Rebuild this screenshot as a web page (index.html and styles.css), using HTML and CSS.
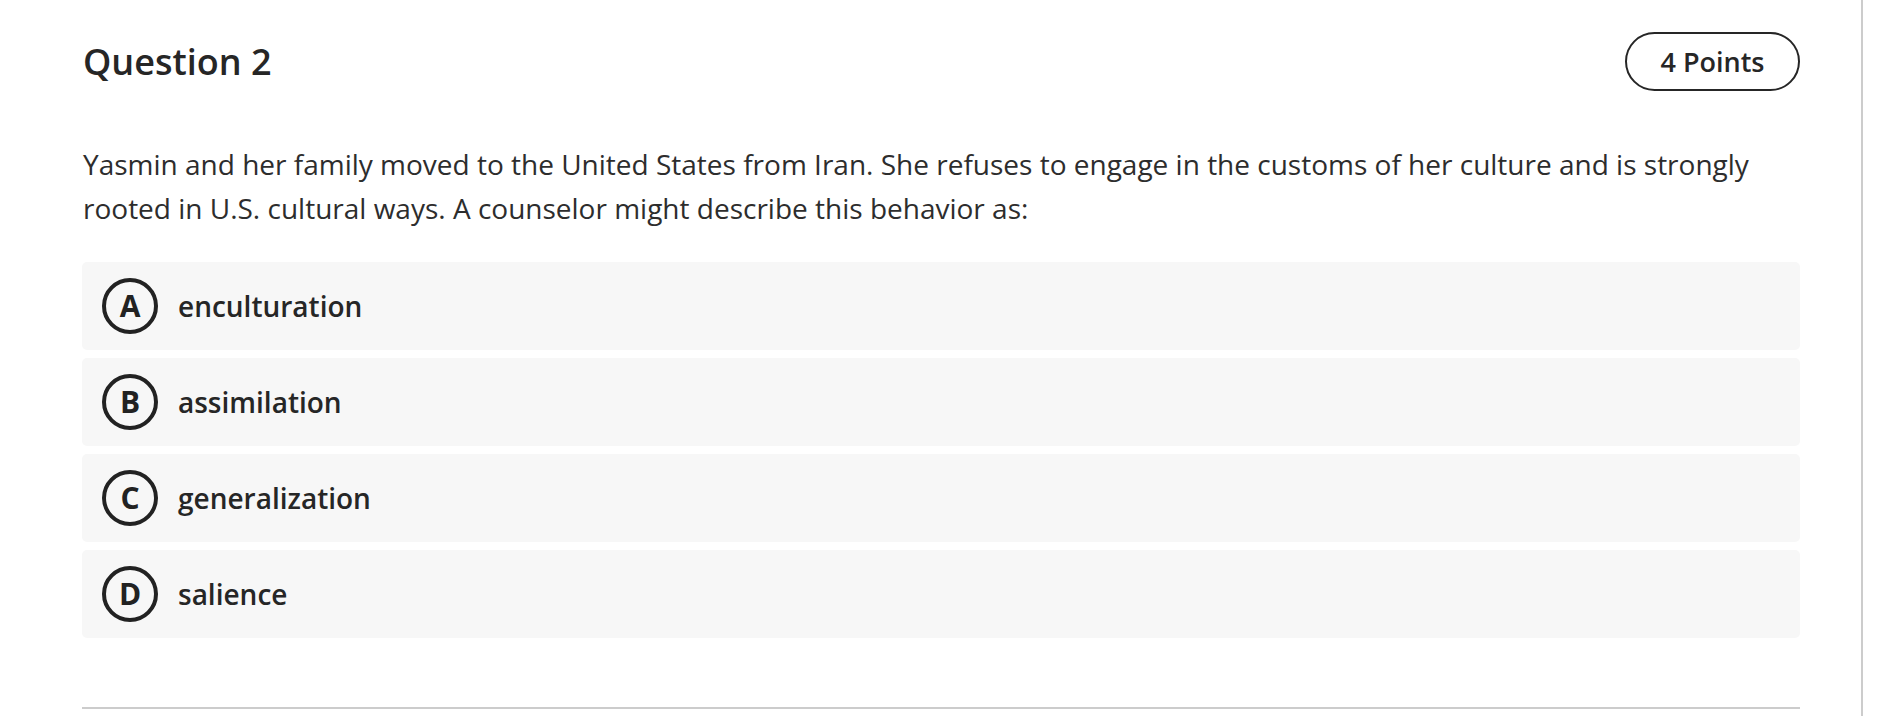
FILE: index.html
```html
<!DOCTYPE html>
<html lang="en">
<head>
<meta charset="utf-8">
<title>Question 2</title>
<link rel="stylesheet" href="styles.css">
</head>
<body>
<div class="page">
  <div class="question">
    <div class="header">
      <h2 class="title">Question 2</h2>
      <span class="points">4 Points</span>
    </div>
    <p class="prompt">Yasmin and her family moved to the United States from Iran. She refuses to engage in the customs of her culture and is strongly rooted in U.S. cultural ways. A counselor might describe this behavior as:</p>
    <div class="options">
      <div class="option"><span class="letter">A</span><span class="label">enculturation</span></div>
      <div class="option"><span class="letter">B</span><span class="label">assimilation</span></div>
      <div class="option"><span class="letter">C</span><span class="label">generalization</span></div>
      <div class="option"><span class="letter">D</span><span class="label">salience</span></div>
    </div>
    <div class="divider"></div>
  </div>
</div>
</body>
</html>
```
FILE: styles.css
```css
html, body {
  margin: 0;
  padding: 0;
  background: #fff;
}
body {
  font-family: "Open Sans", "Noto Sans", sans-serif;
  color: #2d2d2d;
}
.page {
  width: 1861px;
  height: 716px;
  border-right: 2px solid #cccccc;
  box-sizing: content-box;
  overflow: hidden;
}
.question {
  padding: 32px 61px 0 82px;
}
.header {
  display: flex;
  justify-content: space-between;
  align-items: center;
  height: 59px;
}
.title {
  margin: 0;
  font-size: 36px;
  font-weight: 600;
  line-height: 52px;
  color: #262626;
  padding-left: 1px;
}
.points {
  box-sizing: border-box;
  height: 59px;
  width: 175px;
  border: 2px solid #262626;
  border-radius: 30px;
  display: flex;
  align-items: center;
  justify-content: center;
  font-size: 27px;
  font-weight: 600;
  color: #262626;
}
.prompt {
  margin: 51px 0 0 0;
  padding-left: 1px;
  font-size: 28px;
  line-height: 44px;
  font-weight: 400;
  color: #2d2d2d;
}
.options {
  margin-top: 32px;
  display: flex;
  flex-direction: column;
  gap: 8px;
}
.option {
  height: 88px;
  background: #f7f7f7;
  border-radius: 5px;
  display: flex;
  align-items: center;
  padding-left: 20px;
  gap: 20px;
}
.letter {
  box-sizing: border-box;
  width: 56px;
  height: 56px;
  border: 4px solid #222;
  border-radius: 50%;
  display: flex;
  align-items: center;
  justify-content: center;
  font-size: 30px;
  font-weight: 700;
  color: #222;
  line-height: 1;
}
.label {
  font-size: 28px;
  font-weight: 600;
  color: #262626;
}
.divider {
  margin-top: 69px;
  height: 2px;
  background: #cccccc;
}
```
